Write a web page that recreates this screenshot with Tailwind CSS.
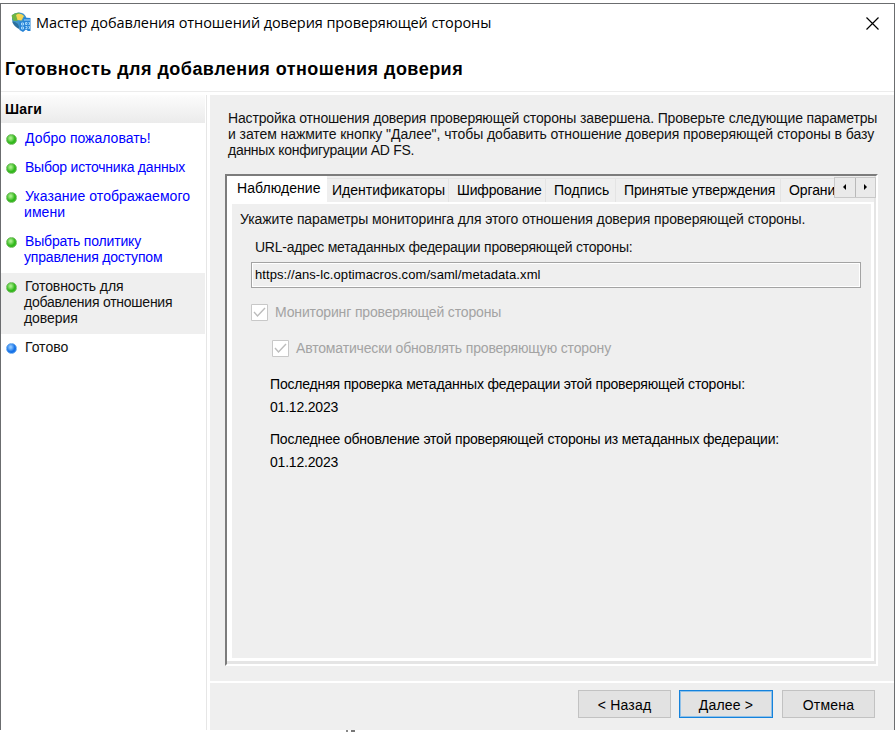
<!DOCTYPE html>
<html lang="ru">
<head>
<meta charset="utf-8">
<title>Мастер добавления отношений доверия проверяющей стороны</title>
<script src="https://cdn.jsdelivr.net/npm/@tailwindcss/browser@4"></script>
</head>
<body class="h-[732px] w-[895px] overflow-hidden bg-white pt-[3px] font-['Liberation_Sans',Arial,sans-serif] text-[14px] leading-4 text-[#111] whitespace-nowrap">
<main class="flex h-[727px] w-[895px] flex-col border border-b-0 border-[#6b6d6f] bg-white">
  <header class="flex h-[38px] shrink-0 items-center pl-[10px] pr-[15px]">
    <svg class="-mt-[2px] h-5 w-5 shrink-0" viewBox="0 0 20 20">
      <path d="M1 3Q5-.5 10 .8Q15 2 15.500 7L12 12 9 16Q3 14 1 8Z" fill="#3f94c9"/>
      <path d="M.5 3.500Q4 0 9 .8L7 4 6.500 9 2 8.500Z" fill="#6fb544"/>
      <path d="M5 3Q9 0 13 4L10.500 8.500 6.500 8Z" fill="#f4d653"/>
      <path d="M1 9.500Q4 9 7 12L9 17.500Q3 15 1 9.500Z" fill="#2b6f9f"/>
      <path d="M12.500 5.500l7 .5v13h-2.500l-2-1.500-3 2.500-3.500-2V9.500h4z" fill="#2683d6"/>
      <path d="M14 7v2M16 7v2M18 7v2M10.500 11h2v2h-2zM14.500 10.500h1.500v2h-1.500zM17.500 10.500h1v2h-1M10.500 15h2v2h-2zM14.500 14.500h1.500v2h-1.500M17.500 14.500h1v2h-1" fill="none" stroke="#a5d8fb" stroke-width="1"/>
    </svg>
    <h1 class="ml-[5px] font-['Open_Sans','Noto_Sans',sans-serif] text-[14.5px] tracking-[-0.09px] text-black">Мастер добавления отношений доверия проверяющей стороны</h1>
    <svg class="ml-auto h-[13px] w-[13px]" viewBox="0 0 13 13"><path d="M.5.5l12 12M12.500.5l-12 12" stroke="#000" stroke-width="1.200"/></svg>
  </header>
  <div class="flex h-[50px] shrink-0 items-center border-b border-[#ececec] pl-1 pt-1">
    <h2 class="text-[18px] font-bold leading-6 tracking-[0.47px] text-black">Готовность для добавления отношения доверия</h2>
  </div>
  <div class="flex min-h-0 flex-1 pt-[3px]">
    <nav class="mr-[3px] w-[206px] shrink-0 border-r border-[#e6e6e6]">
      <h3 class="mr-px h-7 bg-linear-to-b from-[#fcfcfc] to-[#ebebeb] pl-1 pt-[6px] text-[14px] font-bold tracking-[0.2px] text-black">Шаги</h3>
      <ul class="pt-[2px] text-[#0000ff]">
        <li class="flex pb-[8px] pl-[5px] pt-[5px]"><i class="mr-2 mt-[4px] h-[11px] w-[11px] shrink-0 rounded-full border border-[#74bd62] bg-radial-[at_40%_35%] from-[#a5ed88] from-10% to-[#32b81c] to-55%"></i><span>Добро пожаловать!</span></li>
        <li class="flex pb-[8px] pl-[5px] pt-[5px]"><i class="mr-2 mt-[4px] h-[11px] w-[11px] shrink-0 rounded-full border border-[#74bd62] bg-radial-[at_40%_35%] from-[#a5ed88] from-10% to-[#32b81c] to-55%"></i><span class="tracking-[-0.22px]">Выбор источника данных</span></li>
        <li class="flex pb-[8px] pl-[5px] pt-[5px]"><i class="mr-2 mt-[4px] h-[11px] w-[11px] shrink-0 rounded-full border border-[#74bd62] bg-radial-[at_40%_35%] from-[#a5ed88] from-10% to-[#32b81c] to-55%"></i><span class="tracking-[0.06px]">Указание отображаемого<br><span class="-ml-px">имени</span></span></li>
        <li class="flex pb-[8px] pl-[5px] pt-[5px]"><i class="mr-2 mt-[4px] h-[11px] w-[11px] shrink-0 rounded-full border border-[#74bd62] bg-radial-[at_40%_35%] from-[#a5ed88] from-10% to-[#32b81c] to-55%"></i><span class="tracking-[-0.18px]">Выбрать политику<br><span class="-ml-px">управления доступом</span></span></li>
        <li class="mr-px flex bg-[#efefef] pb-[8px] pl-[5px] pt-[5px] text-[#111]"><i class="mr-2 mt-[4px] h-[11px] w-[11px] shrink-0 rounded-full border border-[#74bd62] bg-radial-[at_40%_35%] from-[#a5ed88] from-10% to-[#32b81c] to-55%"></i><span class="tracking-[-0.08px]">Готовность для<br><span class="-ml-px tracking-[-0.24px]">добавления отношения</span><br><span class="-ml-px">доверия</span></span></li>
        <li class="flex pb-[8px] pl-[5px] pt-[5px] text-[#111]"><i class="mr-2 mt-[4px] h-[11px] w-[11px] shrink-0 rounded-full border border-[#6aa9ee] bg-radial-[at_40%_35%] from-[#8cc6ff] from-10% to-[#1672e8] to-55%"></i><span>Готово</span></li>
      </ul>
    </nav>
    <section class="flex min-w-0 flex-1 flex-col bg-[#efefef]">
      <div class="h-[79px] shrink-0 pl-[18px] pt-[15px]">
        <p class="tracking-[-0.155px]">Настройка отношения доверия проверяющей стороны завершена. Проверьте следующие параметры</p>
        <p class="tracking-[-0.075px]">и затем нажмите кнопку "Далее", чтобы добавить отношение доверия проверяющей стороны в базу</p>
        <p class="tracking-[-0.29px]">данных конфигурации AD FS.</p>
      </div>
      <div class="ml-[15px] h-[492px] w-[653px] shrink-0 border-2 border-b-white border-l-[#7c7c7c] border-r-white border-t-[#7c7c7c]">
        <div class="flex h-full flex-col border-b-[3px] border-r-2 border-[#e5e5e5]">
          <div class="relative flex h-[26px] shrink-0">
            <div class="w-[100px] shrink-0 bg-white pl-[10px] pt-1 tracking-[0.06px] text-black">Наблюдение</div>
            <div class="mt-[2px] w-[122px] shrink-0 border-r border-t border-[#e4e4e4] pl-[5px] pt-[3px] text-black">Идентификаторы</div>
            <div class="mt-[2px] w-[97px] shrink-0 border-r border-t border-[#e4e4e4] pl-2 pt-[3px] tracking-[-0.16px] text-black">Шифрование</div>
            <div class="mt-[2px] w-[70px] shrink-0 border-r border-t border-[#e4e4e4] pl-2 pt-[3px] text-black">Подпись</div>
            <div class="mt-[2px] w-[165px] shrink-0 border-r border-t border-[#e4e4e4] pl-2 pt-[3px] tracking-[-0.13px] text-black">Принятые утверждения</div>
            <div class="mt-[2px] min-w-0 flex-1 border-t border-[#e4e4e4] pl-2 pt-[3px] tracking-[-0.1px] text-black">Органи</div>
            <div class="absolute right-[-2px] top-px flex h-[21px] w-[42px] border border-[#c9c9c9] bg-[#eaeaea]">
              <div class="flex flex-1 justify-center border-r border-[#b9b9b9] pt-[6px]"><svg class="h-[6px] w-[3px]" viewBox="0 0 3 6"><path d="M3 0v6L0 3z"/></svg></div>
              <div class="flex flex-1 justify-center pt-[6px]"><svg class="h-[6px] w-[3px]" viewBox="0 0 3 6"><path d="M0 0v6l3-3z"/></svg></div>
            </div>
          </div>
          <div class="min-h-0 flex-1 border-b-[3px] border-l-[5px] border-r-[3px] border-t-[2px] border-white bg-[#efefef] pl-2 pt-[7px]">
            <p class="tracking-[-0.09px]">Укажите параметры мониторинга для этого отношения доверия проверяющей стороны.</p>
            <p class="ml-[15px] mt-[12px] tracking-[-0.24px]">URL-адрес метаданных федерации проверяющей стороны:</p>
            <div class="ml-[11px] mt-[7px] flex h-[26px] w-[610px] items-center border border-[#a3a3a3]">
              <div class="flex h-full w-full items-center border border-white pl-[2px] text-[13px] tracking-[0.08px] text-black">https://ans-lc.optimacros.com/saml/metadata.xml</div>
            </div>
            <div class="ml-[11px] mt-4 flex h-4 items-center gap-[7px] text-[#a3a3a3]">
              <svg class="h-[17px] w-[17px] shrink-0" viewBox="0 0 17 17"><path d="M.5.5h16v16H.5z" fill="#fff" stroke="#c8c8c8"/><path d="M3 8l3.500 4 7.500-8" fill="none" stroke="#bcbcbc" stroke-width="1.400"/></svg>
              <span class="tracking-[-0.15px]">Мониторинг проверяющей стороны</span>
            </div>
            <div class="ml-8 mt-5 flex h-4 items-center gap-[7px] text-[#a3a3a3]">
              <svg class="h-[17px] w-[17px] shrink-0" viewBox="0 0 17 17"><path d="M.5.5h16v16H.5z" fill="#fff" stroke="#c8c8c8"/><path d="M3 8l3.500 4 7.500-8" fill="none" stroke="#bcbcbc" stroke-width="1.400"/></svg>
              <span class="tracking-[-0.16px]">Автоматически обновлять проверяющую сторону</span>
            </div>
            <div class="ml-[30px] mt-5 text-black">
              <p class="tracking-[-0.18px]">Последняя проверка метаданных федерации этой проверяющей стороны:</p>
              <p class="mt-[7px] tracking-[-0.2px]">01.12.2023</p>
              <p class="mt-4 tracking-[-0.195px]">Последнее обновление этой проверяющей стороны из метаданных федерации:</p>
              <p class="mt-[7px] tracking-[-0.2px]">01.12.2023</p>
            </div>
          </div>
        </div>
      </div>
      <footer class="mt-[15px] flex flex-1 justify-end border-t-2 border-white pr-[19px] pt-[7px] text-black">
        <button class="mr-2 h-7 w-[93px] border border-[#c2c2c2] bg-[#e2e2e2] pt-px tracking-[0.2px]">&lt; Назад</button>
        <button class="mr-[9px] h-7 w-[94px] border border-[#1482dc] bg-[#e2e2e2] pt-px tracking-[0.2px] ring-1 ring-inset ring-[#8fc0e8]">Далее &gt;</button>
        <button class="h-7 w-[93px] border border-[#c2c2c2] bg-[#e2e2e2] pt-px tracking-[0.2px]">Отмена</button>
      </footer>
    </section>
  </div>
</main>
<div class="ml-[346px] flex gap-[3px]"><i class="h-[2px] w-[2px] bg-[#888]"></i><i class="h-[2px] w-[4px] bg-[#777]"></i></div>
</body>
</html>
